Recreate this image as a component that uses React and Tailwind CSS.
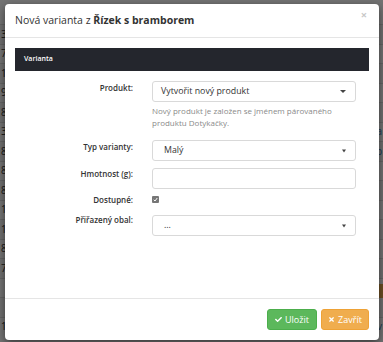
import { FaCheck, FaTimes } from 'react-icons/fa';

const bgRows = ['3', '7', '1', '9', '8', '3', '8', '8', '8', '1', '1', '8', '7', '', '', '1'];

function Caret({ small }) {
  return small ? (
    <svg width="4" height="4" viewBox="0 0 4 4" className="shrink-0">
      <path d="M0 0.5h4L2 3.5z" fill="#444" />
    </svg>
  ) : (
    <svg width="6" height="3" viewBox="0 0 6 3" className="shrink-0">
      <path d="M0 0h6L3 3z" fill="#444" />
    </svg>
  );
}

function Field({ label, children, top = 'pt-[1px]' }) {
  return (
    <div className="flex">
      <div className={`w-[118px] shrink-0 text-right text-[8px] font-semibold leading-[11px] text-[#333] ${top}`}>{label}</div>
      <div className="ml-[19px] w-[204px]">{children}</div>
    </div>
  );
}

function Select({ value, small, pad = 'pl-[8px]' }) {
  return (
    <div className={`flex h-[21px] items-center justify-between rounded-[3px] border border-[#d9d9d9] bg-white ${pad} pr-[9px] text-[8.8px] text-[#333]`}>
      <span>{value}</span>
      <Caret small={small} />
    </div>
  );
}

export default function App() {
  return (
    <div className="relative h-[342px] w-[383px] overflow-hidden bg-white font-['Open_Sans',sans-serif]">
      {/* page behind the dialog */}
      <div className="pt-[24px]">
        {bgRows.map((n, i) => (
          <div
            key={i}
            className={`flex h-[19.5px] items-center justify-between border-t border-[#ddd] px-[1px] text-[10px] ${i % 2 ? 'bg-white' : 'bg-[#f5f5f5]'}`}
          >
            <span className="text-[#333]">{n}</span>
            <span className="text-[#337ab7]">{i === 5 ? 'pa' : i === 6 ? 'p' : i === 15 ? 'v' : ''}</span>
          </div>
        ))}
      </div>
      <div className="absolute right-0 top-[284px] h-[14px] w-[6px] bg-[#f0ad4e]" />
      <div className="absolute inset-0 bg-black/55" />

      {/* dialog */}
      <div className="absolute left-[5px] top-[4px] flex h-[336px] w-[374px] flex-col rounded-[4px] bg-white shadow-[0_3px_9px_rgba(0,0,0,0.5)]">
        <div className="flex h-[34px] shrink-0 items-center justify-between border-b border-[#e5e5e5] pl-[10px] pr-[12px]">
          <h4 className="text-[10.5px] text-[#333]">
            Nová varianta z <b className="font-bold">Řízek s bramborem</b>
          </h4>
          <span className="-mt-[12px] text-[11px] font-bold leading-none text-[#c8c8c8]">×</span>
        </div>

        <div className="flex-1 px-[10px] pt-[10px]">
          <div className="flex h-[23px] items-center bg-[#24262d] pl-[9px] text-[7px] font-semibold text-white">Varianta</div>

          <div className="flex flex-col pt-[10px]">
            <Field label="Produkt:">
              <Select value="Vytvořit nový produkt" />
              <p className="mt-[3px] text-[8px] leading-[12px] text-[#8a8a8a]">
                Nový produkt je založen se jménem párovaného
                <br />
                produktu Dotykačky.
              </p>
            </Field>
            <div className="mt-[11px]">
              <Field label="Typ varianty:">
                <Select value="Malý" small pad="pl-[11px]" />
              </Field>
            </div>
            <div className="mt-[7px]">
              <Field label="Hmotnost (g):" top="pt-0">
                <div className="h-[21px] rounded-[3px] border border-[#d9d9d9] bg-white" />
              </Field>
            </div>
            <div className="mt-[5px]">
              <Field label="Dostupné:" top="pt-0">
                <div className="flex h-[11px] items-center">
                  <span className="flex h-[7px] w-[7px] items-center justify-center rounded-[1px] bg-[#777]">
                    <svg width="5" height="5" viewBox="0 0 10 10">
                      <path d="M1.5 5.5l2.5 2.5 4.5-6" stroke="white" strokeWidth="2" fill="none" />
                    </svg>
                  </span>
                </div>
              </Field>
            </div>
            <div className="mt-[10px]">
              <Field label="Přiřazený obal:" top="-mt-[1px]">
                <Select value="..." small pad="pl-[11px]" />
              </Field>
            </div>
          </div>
        </div>

        <div className="flex h-[42px] shrink-0 items-center justify-end gap-[4px] border-t border-[#e5e5e5] pr-[10px]">
          <button className="flex h-[21px] w-[50px] items-center justify-center gap-[3px] rounded-[3px] border border-[#4cae4c] bg-[#5cb85c] text-[9px] text-white">
            <FaCheck className="h-[7px] w-[7px]" />
            Uložit
          </button>
          <button className="flex h-[21px] w-[48px] items-center justify-center gap-[3px] rounded-[3px] border border-[#eea236] bg-[#f0ad4e] text-[9px] text-white">
            <FaTimes className="h-[7px] w-[7px]" />
            Zavřít
          </button>
        </div>
      </div>
    </div>
  );
}
